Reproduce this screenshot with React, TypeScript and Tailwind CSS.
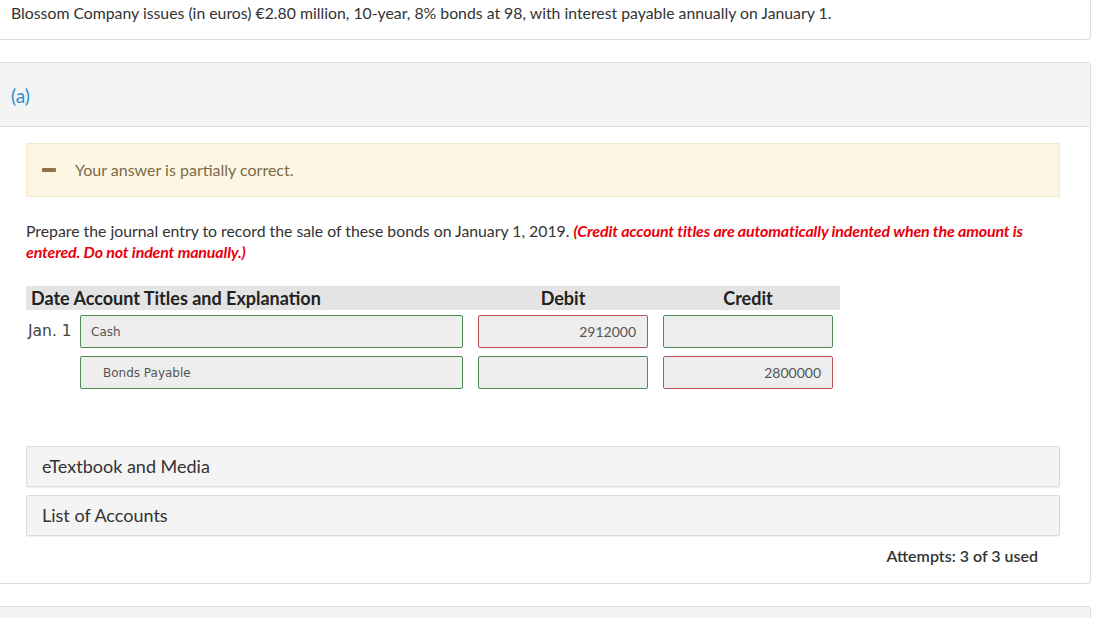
export default function App() {
  return (
    <div className="min-h-screen bg-white font-['Lato',sans-serif] text-[#333] overflow-hidden">
      <div className="w-[1091px] h-[40px] border-r border-b border-[#dcdcdc] rounded-br-[4px] pl-[11px] pt-[3px] text-[15.8px] leading-[20px]">
        Blossom Company issues (in euros) €2.80 million, 10-year, 8% bonds at 98, with interest payable annually on January 1.
      </div>

      <div className="mt-[22px] w-[1091px] border-t border-r border-b border-[#dcdcdc] rounded-r-[4px]">
        <div className="h-[64px] bg-[#f4f4f4] border-b border-[#dcdcdc] pl-[11px] flex items-center">
          <span className="text-[19px] text-[#2b8fd0] pt-[3px]">(a)</span>
        </div>

        <div className="pl-[26px] pr-[30px] pt-[16px]">
          <div className="h-[54px] bg-[#fdf6e4] border border-[#f3e9d0] flex items-center pl-[15px]">
            <span className="w-[14px] h-[4px] bg-[#8b7542] rounded-[1px] mr-[19px]" />
            <span className="text-[16px] text-[#7b6b44]">Your answer is partially correct.</span>
          </div>

          <p className="mt-[23px] text-[15.8px] leading-[21px] text-[#333]">
            Prepare the journal entry to record the sale of these bonds on January 1, 2019.{" "}
            <span className="text-[#e8000b] font-bold italic text-[16px] tracking-[-0.01em]">
              (Credit account titles are automatically indented when the amount is entered. Do not indent manually.)
            </span>
          </p>

          <div className="mt-[24px] w-[814px]">
            <div className="h-[24px] bg-[#e4e4e4] flex items-center text-[18px] font-bold text-[#222] leading-[24px]">
              <div className="w-[437px] pl-[5px]">Date Account Titles and Explanation</div>
              <div className="w-[170px] ml-[15px] text-center">Debit</div>
              <div className="w-[170px] ml-[15px] text-center">Credit</div>
            </div>

            <div className="mt-[5px] flex flex-col gap-[8px]">
              <JournalRow date="Jan. 1" account="Cash" debit="2912000" credit="" debitState="wrong" creditState="ok" />
              <JournalRow date="" account="Bonds Payable" indent debit="" credit="2800000" debitState="ok" creditState="wrong" />
            </div>
          </div>

          <div className="mt-[57px] flex flex-col gap-[8px]">
            <div className="h-[41px] bg-[#f4f4f4] border border-[#dcdcdc] shadow-[0_1px_1px_rgba(0,0,0,0.06)] rounded-[2px] flex items-center pl-[15px] text-[18px] text-[#333]">
              eTextbook and Media
            </div>
            <div className="h-[41px] bg-[#f4f4f4] border border-[#dcdcdc] shadow-[0_1px_1px_rgba(0,0,0,0.06)] rounded-[2px] flex items-center pl-[15px] text-[18px] text-[#333]">
              List of Accounts
            </div>
          </div>

          <div className="flex justify-end pr-[22px] pt-[10px] pb-[17px] text-[16px] font-semibold text-[#333] leading-[20px]">
            Attempts: 3 of 3 used
          </div>
        </div>
      </div>

      <div className="mt-[22px] w-[1091px] h-[40px] bg-[#f4f4f4] border-t border-r border-[#dcdcdc] rounded-tr-[4px]" />
    </div>
  );
}

type FieldState = "ok" | "wrong";

function borderFor(state: FieldState) {
  return state === "ok" ? "border-[#4f8a4f]" : "border-[#c0504d]";
}

function JournalRow({
  date,
  account,
  indent,
  debit,
  credit,
  debitState,
  creditState,
}: {
  date: string;
  account: string;
  indent?: boolean;
  debit: string;
  credit: string;
  debitState: FieldState;
  creditState: FieldState;
}) {
  return (
    <div className="flex items-center h-[33px]">
      <div className="w-[54px] pl-[2px] text-[15.5px] text-[#444] font-['DejaVu_Sans',sans-serif]">{date}</div>
      <div
        className={
          "w-[383px] h-[33px] bg-[#eeeeee] border border-[#4f8a4f] rounded-[2px] flex items-center text-[12px] text-[#555] font-['DejaVu_Sans',sans-serif] " +
          (indent ? "pl-[22px]" : "pl-[10px]")
        }
      >
        {account}
      </div>
      <div
        className={
          "ml-[15px] w-[170px] h-[33px] bg-[#eeeeee] border rounded-[2px] flex items-center justify-end pr-[11px] text-[14px] text-[#555] " +
          borderFor(debitState)
        }
      >
        {debit}
      </div>
      <div
        className={
          "ml-[15px] w-[170px] h-[33px] bg-[#eeeeee] border rounded-[2px] flex items-center justify-end pr-[11px] text-[14px] text-[#555] " +
          borderFor(creditState)
        }
      >
        {credit}
      </div>
    </div>
  );
}
